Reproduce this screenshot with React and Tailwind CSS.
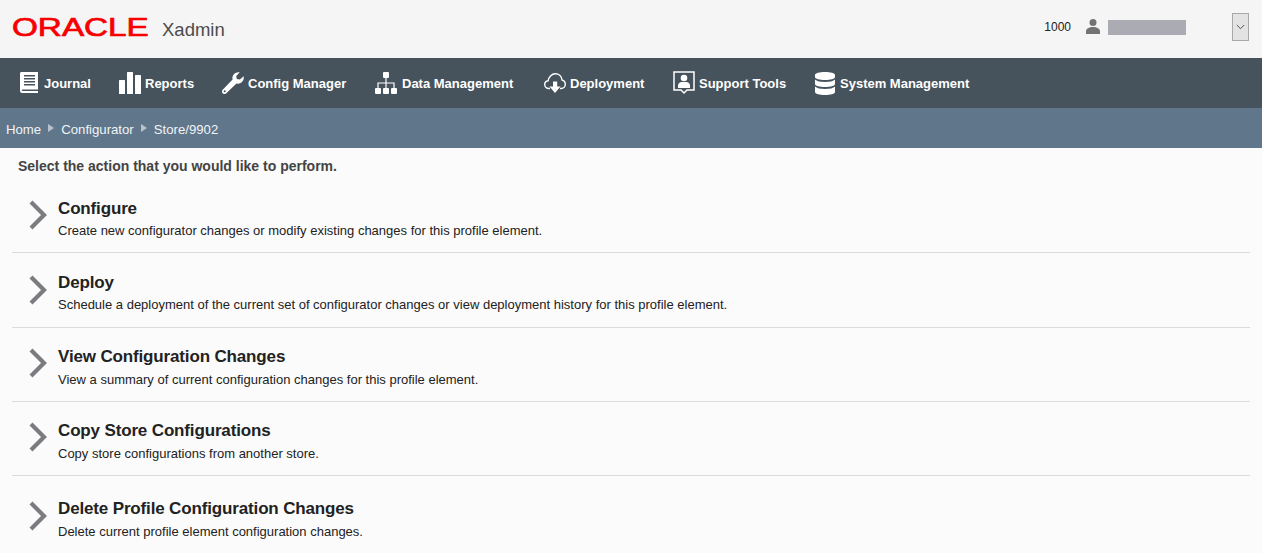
const FONT = "font-['Liberation_Sans',Arial,sans-serif]";

const JournalIcon = () => (
  <svg width="18" height="22" viewBox="0 0 18 22" fill="#fff">
    <path d="M1.5 0H18v17.5H2.5c-.9 0-1 1.600 0 1.600H18V21H2C.7 21 0 20 0 18.800V1.500C0 .6.600 0 1.500 0z" />
    <path d="M4 3h11v1.400H4zM4 6h11v1.400H4zM4 9h11v1.400H4zM4 12h11v1.400H4z" fill="#46535d" />
  </svg>
);

const ReportsIcon = () => (
  <svg width="22" height="22" viewBox="0 0 22 22" fill="#fff">
    <rect x="0" y="8" width="6" height="14" rx="0.5" />
    <rect x="8" y="0" width="6" height="22" rx="0.5" />
    <rect x="16" y="3" width="6" height="19" rx="0.5" />
  </svg>
);

const WrenchIcon = () => (
  <svg width="22" height="22" viewBox="0 0 22 22" fill="#fff">
    <path d="M21.600 4.300c.5 2.200-.1 4.300-1.700 5.800-1.500 1.400-3.500 1.900-5.400 1.400L4.300 21.300c-1 1-2.600 1-3.600 0s-1-2.600 0-3.600L10.600 7.500C10.100 5.600 10.600 3.500 12.100 2 13.600.5 15.700-.2 17.800.3l-3.600 3.600.6 3.100 3.100.6z" />
    <circle cx="2.700" cy="19.300" r="1" fill="#46535d" />
  </svg>
);

const DataIcon = () => (
  <svg width="22" height="22" viewBox="0 0 22 22" fill="#fff">
    <rect x="8" y="0" width="6" height="6" rx="1" />
    <rect x="0" y="16" width="6" height="6" rx="1" />
    <rect x="8" y="16" width="6" height="6" rx="1" />
    <rect x="16" y="16" width="6" height="6" rx="1" />
    <path d="M10.400 6h1.200v4.400H19.600V16h-1.200v-4.400H11.600V16h-1.200v-4.400H3.600V16H2.400v-5.600h8z" />
  </svg>
);

const CloudIcon = () => (
  <svg width="22" height="22" viewBox="0 0 22 22" fill="none">
    <path d="M6 16.500H5c-2.400 0-4.300-1.700-4.300-3.900 0-2 1.500-3.500 3.400-3.800C4.600 5.100 7.600 1.800 11.400 1.800c3.500 0 6.300 2.700 6.700 6.300 2 .4 3.200 2.200 3.200 4.200 0 2.300-1.800 4.200-4.200 4.200H16" stroke="#fff" strokeWidth="1.400" />
    <path d="M9 9.500h4.200v5H16.500L11 21l-5.500-6.500H9z" fill="#fff" />
  </svg>
);

const SupportIcon = () => (
  <svg width="22" height="24" viewBox="0 0 22 24" fill="none">
    <path d="M1 1h20v18h-7l-3 3-3-3H1z" stroke="#fff" strokeWidth="1.500" />
    <circle cx="11" cy="7" r="3.300" fill="#fff" />
    <path d="M5 17v-2.500c0-2 2-3.500 3.500-3.500h5c1.500 0 3.500 1.500 3.500 3.500V17z" fill="#fff" />
  </svg>
);

const DatabaseIcon = () => (
  <svg width="20" height="23" viewBox="0 0 20 23" fill="#fff">
    <path d="M0 3c0-2 4.500-3 10-3s10 1 10 3v2c0 2-4.500 3-10 3S0 7 0 5z" />
    <path d="M0 7.500C1.500 9.200 5.500 10 10 10s8.500-.8 10-2.500V12c0 2-4.500 3-10 3S0 14 0 12z" />
    <path d="M0 14.500C1.500 16.200 5.500 17 10 17s8.500-.8 10-2.500V20c0 2-4.500 3-10 3S0 22 0 20z" />
  </svg>
);

const Chevron = ({ className }) => (
  <svg width="20" height="30" viewBox="0 0 20 30" fill="none" className={`shrink-0 ${className}`}>
    <path d="M3 2l13 13L3 28" stroke="#7b7b80" strokeWidth="4.200" />
  </svg>
);

const navItems = [
  { label: 'Journal', icon: <JournalIcon />, item: 'w-[99px] gap-[6px]' },
  { label: 'Reports', icon: <ReportsIcon />, item: 'w-[103px] gap-[4px]' },
  { label: 'Config Manager', icon: <WrenchIcon />, item: 'w-[153px] gap-[4px]' },
  { label: 'Data Management', icon: <DataIcon />, item: 'w-[169px] gap-[5px]' },
  { label: 'Deployment', icon: <CloudIcon />, item: 'w-[129px] gap-[4px]' },
  { label: 'Support Tools', icon: <SupportIcon />, item: 'w-[142px] gap-[4px]' },
  { label: 'System Management', icon: <DatabaseIcon />, item: 'gap-[5px]' },
];

const actions = [
  {
    title: 'Configure',
    text: 'Create new configurator changes or modify existing changes for this profile element.',
    row: 'h-[75px] pt-[21px] border-b',
    chevron: 'mt-[1px]',
    desc: 'mt-[3px]',
  },
  {
    title: 'Deploy',
    text: 'Schedule a deployment of the current set of configurator changes or view deployment history for this profile element.',
    row: 'h-[75px] pt-[20px] border-b',
    chevron: 'mt-[2px]',
    desc: 'mt-[3px]',
  },
  {
    title: 'View Configuration Changes',
    text: 'View a summary of current configuration changes for this profile element.',
    row: 'h-[74px] pt-[19px] border-b',
    chevron: 'mt-[1px]',
    desc: 'mt-[4px]',
  },
  {
    title: 'Copy Store Configurations',
    text: 'Copy store configurations from another store.',
    row: 'h-[74px] pt-[19px] border-b',
    chevron: 'mt-[1px]',
    desc: 'mt-[4px]',
  },
  {
    title: 'Delete Profile Configuration Changes',
    text: 'Delete current profile element configuration changes.',
    row: 'h-[77px] pt-[23px]',
    chevron: 'mt-[2px]',
    desc: 'mt-[4px]',
  },
];

const Crumb = () => (
  <span className="h-0 w-0 border-y-[4px] border-l-[6px] border-y-transparent border-l-[#b7c2cc]" />
);

export default function App() {
  return (
    <div className={`h-[553px] w-full overflow-hidden bg-[#fbfbfb] ${FONT}`}>
      <header className="flex h-[58px] items-center bg-[#f5f5f5] pb-[4px] pl-[12px] pr-[13px]">
        <span className="inline-block w-[103px] origin-left scale-x-[1.33] text-[25px] leading-none text-[#f80000] [-webkit-text-stroke:0.7px_#f80000]">
          ORACLE
        </span>
        <span className="ml-[47px] mt-[6px] text-[18.5px] text-[#4c4c4c]">Xadmin</span>
        <div className="ml-auto flex items-center">
          <span className="text-[12px] text-[#222]">1000</span>
          <svg width="14" height="15" viewBox="0 0 14 15" fill="#737373" className="mb-[2px] ml-[15px]">
            <circle cx="7" cy="3.500" r="3.500" />
            <path d="M0 15v-2.500C0 9.500 3 8 7 8s7 1.500 7 4.500V15z" />
          </svg>
          <div className="ml-[8px] h-[15px] w-[78px] bg-[#ababb3]" />
          <button className="ml-[46px] flex h-[28px] w-[17px] items-center justify-center border border-[#a9a9a9] bg-[#e3e3e3]">
            <svg width="9" height="6" viewBox="0 0 9 6" fill="none">
              <path d="M.8 1l3.700 3.700L8.200 1" stroke="#555" />
            </svg>
          </button>
        </div>
      </header>

      <nav className="flex h-[50px] items-center bg-[#46535d] pl-[20px]">
        {navItems.map((n) => (
          <a key={n.label} className={`flex items-center text-[13px] font-bold text-white ${n.item}`}>
            {n.icon}
            <span className="mt-[2px]">{n.label}</span>
          </a>
        ))}
      </nav>

      <div className="flex h-[40px] items-center gap-[7px] bg-[#5f768b] pl-[6px] text-[13.2px] text-[#f2f4f6]">
        <span className="mt-[4px]">Home</span>
        <Crumb />
        <span className="mt-[4px]">Configurator</span>
        <Crumb />
        <span className="mt-[4px]">Store/9902</span>
      </div>

      <p className="pl-[18px] pt-[10px] text-[14px] font-bold leading-[16px] text-[#444]">
        Select the action that you would like to perform.
      </p>

      <div className="mx-[12px] mt-[4px]">
        {actions.map((a) => (
          <div key={a.title} className={`flex border-[#dcdcdc] pl-[16px] ${a.row}`}>
            <Chevron className={a.chevron} />
            <div className="ml-[10px]">
              <h2 className="text-[17px] font-bold leading-[20px] tracking-[-0.15px] text-[#222]">{a.title}</h2>
              <p className={`text-[13px] leading-[18px] text-[#222] ${a.desc}`}>{a.text}</p>
            </div>
          </div>
        ))}
      </div>
    </div>
  );
}
